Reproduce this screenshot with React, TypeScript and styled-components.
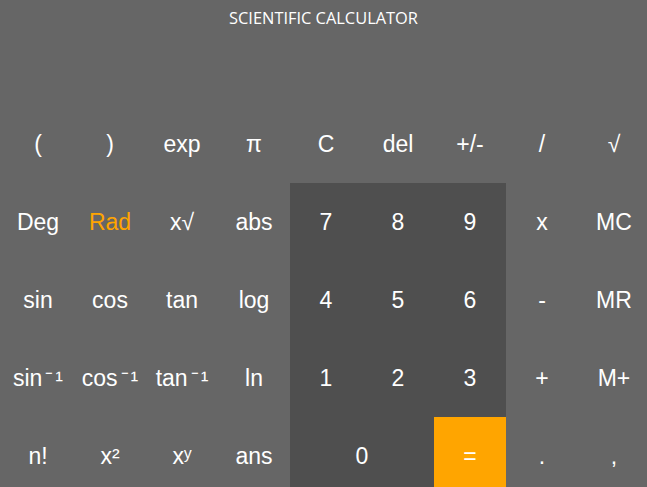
import styled, { createGlobalStyle } from 'styled-components';

const GlobalStyle = createGlobalStyle`
    html, body {
        margin: 0;
        padding: 0;
        background: #666666;
        overflow: hidden;
    }
`;

const Page = styled.div`
    width: 647px;
    height: 487px;
    background: #666666;
    overflow: hidden;
    font-family: 'Liberation Sans', Arial, sans-serif;
`;

const Title = styled.h1`
    margin: 0;
    height: 105px;
    padding-top: 8px;
    box-sizing: border-box;
    text-align: center;
    font-family: 'Open Sans', 'Noto Sans', sans-serif;
    font-weight: 400;
    font-size: 16.4px;
    line-height: 20px;
    color: #ffffff;
`;

const Keypad = styled.div`
    display: grid;
    grid-template-columns: repeat(9, 72px);
    grid-auto-rows: 78px;
    margin-left: 2px;
    width: 648px;
`;

type Tone = 'plain' | 'dark' | 'accent';

interface KeyProps {
    $tone?: Tone;
    $span?: number;
    $highlight?: boolean;
}

const Key = styled.div<KeyProps>`
    display: flex;
    align-items: center;
    justify-content: center;
    grid-column: span ${p => p.$span || 1};
    font-size: 23px;
    color: ${p => (p.$highlight ? '#ffa500' : '#ffffff')};
    background: ${p =>
        p.$tone === 'dark' ? '#4f4f4f' : p.$tone === 'accent' ? '#ffa500' : 'transparent'};
    white-space: nowrap;
`;

// the inverse-trig "⁻¹" sits a little apart from the function name
const Inverse = styled.span`
    margin-left: 3px;
    letter-spacing: 2px;
    margin-right: -2px;
`;

interface KeyDef {
    label: string;
    inverse?: boolean;
    tone?: Tone;
    span?: number;
    highlight?: boolean;
}

const keys: KeyDef[] = [
    { label: '(' }, { label: ')' }, { label: 'exp' }, { label: 'π' },
    { label: 'C' }, { label: 'del' }, { label: '+/-' }, { label: '/' }, { label: '√' },

    { label: 'Deg' }, { label: 'Rad', highlight: true }, { label: 'x√' }, { label: 'abs' },
    { label: '7', tone: 'dark' }, { label: '8', tone: 'dark' }, { label: '9', tone: 'dark' },
    { label: 'x' }, { label: 'MC' },

    { label: 'sin' }, { label: 'cos' }, { label: 'tan' }, { label: 'log' },
    { label: '4', tone: 'dark' }, { label: '5', tone: 'dark' }, { label: '6', tone: 'dark' },
    { label: '-' }, { label: 'MR' },

    { label: 'sin', inverse: true }, { label: 'cos', inverse: true },
    { label: 'tan', inverse: true }, { label: 'ln' },
    { label: '1', tone: 'dark' }, { label: '2', tone: 'dark' }, { label: '3', tone: 'dark' },
    { label: '+' }, { label: 'M+' },

    { label: 'n!' }, { label: 'x²' }, { label: 'xʸ' }, { label: 'ans' },
    { label: '0', tone: 'dark', span: 2 }, { label: '=', tone: 'accent' },
    { label: '.' }, { label: ',' },
];

export default function App() {
    return (
        <Page>
            <GlobalStyle />
            <Title>SCIENTIFIC CALCULATOR</Title>
            <Keypad>
                {keys.map((k, i) => (
                    <Key key={i} $tone={k.tone} $span={k.span} $highlight={k.highlight}>
                        {k.label}
                        {k.inverse && <Inverse>⁻¹</Inverse>}
                    </Key>
                ))}
            </Keypad>
        </Page>
    );
}
